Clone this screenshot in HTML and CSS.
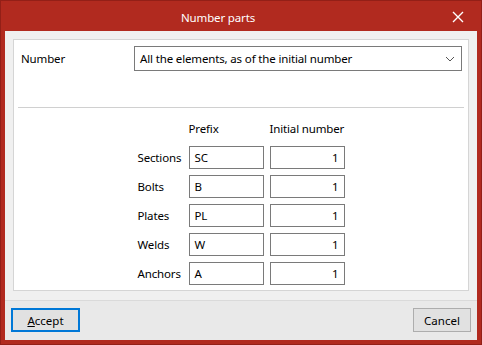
FILE: index.html
```html
<!DOCTYPE html>
<html>
<head>
<meta charset="utf-8">
<link rel="stylesheet" href="styles.css">
</head>
<body>
<div class="window">
  <div class="titlebar">
    <div class="title">Number parts</div>
    <div class="close">
      <svg width="12" height="12" viewBox="0 0 12 12"><path d="M1 1 L11 11 M11 1 L1 11" stroke="#fff" stroke-width="1.4" fill="none"/></svg>
    </div>
  </div>
  <div class="client">
    <div class="content">
      <div class="panel">
        <div class="number-row">
          <div class="number-label">Number</div>
          <div class="select">
            <span>All the elements, as of the initial number</span>
            <svg class="chev" width="10" height="6" viewBox="0 0 10 6"><path d="M1 1 L5 5 L9 1" stroke="#555" stroke-width="1" fill="none"/></svg>
          </div>
        </div>
        <div class="rule"></div>
        <div class="grid">
          <div></div>
          <div class="head">Prefix</div>
          <div class="head">Initial number</div>

          <div class="lbl">Sections</div>
          <div class="input">SC</div>
          <div class="input num">1</div>

          <div class="lbl">Bolts</div>
          <div class="input">B</div>
          <div class="input num">1</div>

          <div class="lbl">Plates</div>
          <div class="input">PL</div>
          <div class="input num">1</div>

          <div class="lbl">Welds</div>
          <div class="input">W</div>
          <div class="input num">1</div>

          <div class="lbl">Anchors</div>
          <div class="input">A</div>
          <div class="input num">1</div>
        </div>
      </div>
    </div>
    <div class="footer">
      <button class="btn primary"><u>A</u>ccept</button>
      <button class="btn">Cancel</button>
    </div>
  </div>
</div>
</body>
</html>
```

FILE: styles.css
```css
* { box-sizing: border-box; }
html, body { margin: 0; padding: 0; }
body {
  font-family: "Noto Sans", "Liberation Sans", sans-serif;
  font-size: 11.5px;
  letter-spacing: -0.15px;
  color: #000;
}
.window {
  width: 482px;
  height: 345px;
  background: #b12a1f;
  border: 1px solid #931f17;
  display: flex;
  flex-direction: column;
}
.titlebar {
  height: 30px;
  display: flex;
  align-items: center;
  color: #fff;
}
.title {
  flex: 1;
  text-align: center;
  padding-top: 2px;
}
.close {
  width: 46px;
  height: 30px;
  display: flex;
  align-items: center;
  justify-content: center;
  padding-top: 2px;
}
.client {
  flex: 1;
  margin: 0 4px 4px 4px;
  background: #f0f0f0;
  display: flex;
  flex-direction: column;
}
.content {
  flex: 1;
  padding: 8px 8px 9px 8px;
  display: flex;
}
.panel {
  flex: 1;
  background: #fff;
  border: 1px solid #d5d5d5;
  padding: 6px 6px 0 6px;
  display: flex;
  flex-direction: column;
}
.number-row {
  display: flex;
  align-items: center;
  height: 25px;
}
.number-label {
  width: 114px;
  padding-left: 1px;
}
.select {
  flex: 1;
  height: 25px;
  border: 1px solid #7a7a7a;
  display: flex;
  align-items: center;
  padding: 0 5px 0 5px;
}
.select span { flex: 1; }
.chev { margin-right: 1px; }
.rule {
  height: 1px;
  background: #d0d0d0;
  margin: 36px -2px 0 -2px;
}
.grid {
  align-self: center;
  display: grid;
  grid-template-columns: 45px 75px 75px;
  column-gap: 6px;
  row-gap: 6px;
  margin-top: 12px;
}
.head {
  height: 18px;
  line-height: 18px;
  margin-bottom: 2px;
  white-space: nowrap;
}
.lbl {
  height: 23px;
  display: flex;
  align-items: center;
  white-space: nowrap;
}
.input {
  height: 23px;
  border: 1px solid #7a7a7a;
  display: flex;
  align-items: center;
  padding: 0 5px;
}
.input.num { justify-content: flex-end; }
.footer {
  height: 40px;
  border-top: 1px solid #dadada;
  background: #e9e9e9;
  display: flex;
  justify-content: space-between;
  align-items: flex-start;
  padding: 7px 6px 0 6px;
}
.btn {
  font: inherit;
  color: #000;
  height: 24px;
  background: #e1e1e1;
  border: 1px solid #adadad;
  padding: 0;
  width: 58px;
}
.btn.primary {
  width: 69px;
  border: 2px solid #0078d7;
}
```
